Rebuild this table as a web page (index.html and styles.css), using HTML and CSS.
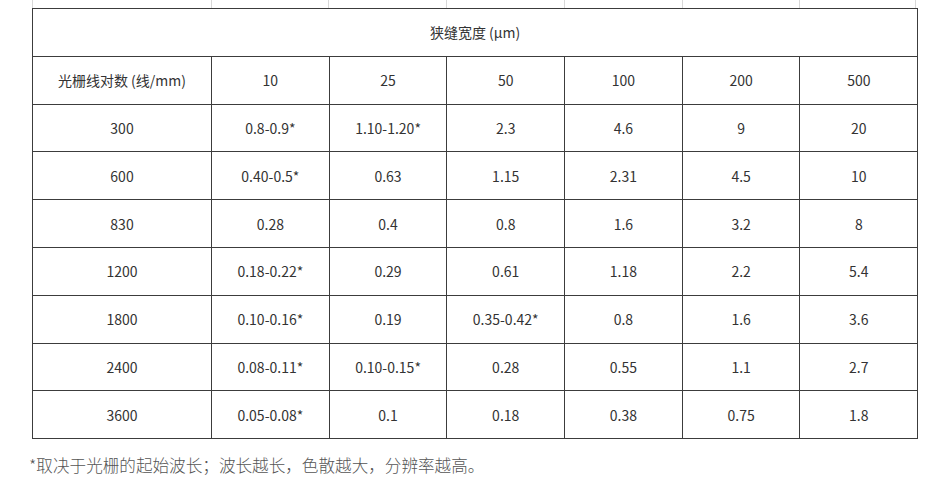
FILE: index.html
```
<!DOCTYPE html>
<html lang="zh">
<head>
<meta charset="utf-8">
<link rel="stylesheet" href="styles.css">
</head>
<body>
<div class="wrap">
  <div class="ticks">
    <span></span><span></span><span></span><span></span><span></span><span></span><span></span>
  </div>
  <table class="grid">
    <colgroup>
      <col class="c0"><col class="c1"><col class="c1"><col class="c1"><col class="c1"><col class="c1"><col class="c1">
    </colgroup>
    <tr><td colspan="7">狭缝宽度 (μm)</td></tr>
    <tr><td>光栅线对数 (线/mm)</td><td>10</td><td>25</td><td>50</td><td>100</td><td>200</td><td>500</td></tr>
    <tr><td>300</td><td>0.8-0.9*</td><td>1.10-1.20*</td><td>2.3</td><td>4.6</td><td>9</td><td>20</td></tr>
    <tr><td>600</td><td>0.40-0.5*</td><td>0.63</td><td>1.15</td><td>2.31</td><td>4.5</td><td>10</td></tr>
    <tr><td>830</td><td>0.28</td><td>0.4</td><td>0.8</td><td>1.6</td><td>3.2</td><td>8</td></tr>
    <tr><td>1200</td><td>0.18-0.22*</td><td>0.29</td><td>0.61</td><td>1.18</td><td>2.2</td><td>5.4</td></tr>
    <tr><td>1800</td><td>0.10-0.16*</td><td>0.19</td><td>0.35-0.42*</td><td>0.8</td><td>1.6</td><td>3.6</td></tr>
    <tr><td>2400</td><td>0.08-0.11*</td><td>0.10-0.15*</td><td>0.28</td><td>0.55</td><td>1.1</td><td>2.7</td></tr>
    <tr><td>3600</td><td>0.05-0.08*</td><td>0.1</td><td>0.18</td><td>0.38</td><td>0.75</td><td>1.8</td></tr>
  </table>
  <p class="note">*取决于光栅的起始波长；波长越长，色散越大，分辨率越高。</p>
</div>
</body>
</html>
```
FILE: styles.css
```
html, body {
  margin: 0;
  padding: 0;
  background: #fff;
}
body {
  font-family: "Noto Sans CJK SC", "Noto Sans", sans-serif;
  color: #333;
}
.wrap {
  padding-left: 32px;
  width: 885px;
}
.ticks {
  display: grid;
  grid-template-columns: 179px 117px 118px 118px 118px 117px 117px;
  height: 8px;
}
.ticks span {
  border-left: 1px solid #d8d8d8;
}
.ticks span:last-child {
  border-right: 1px solid #d8d8d8;
}
.grid {
  border-collapse: collapse;
  table-layout: fixed;
  width: 885px;
}
.c0 { width: 179px; }
.c1 { width: 117.7px; }
.grid td {
  border: 1px solid #3c3c3c;
  height: 46.8px;
  padding: 0;
  text-align: center;
  vertical-align: middle;
  font-size: 14px;
  line-height: 16px;
  color: #333;
}
.note {
  margin: 15px 0 0 -3px;
  font-size: 16.6px;
  line-height: 22px;
  font-weight: 300;
  color: #555;
}
```
